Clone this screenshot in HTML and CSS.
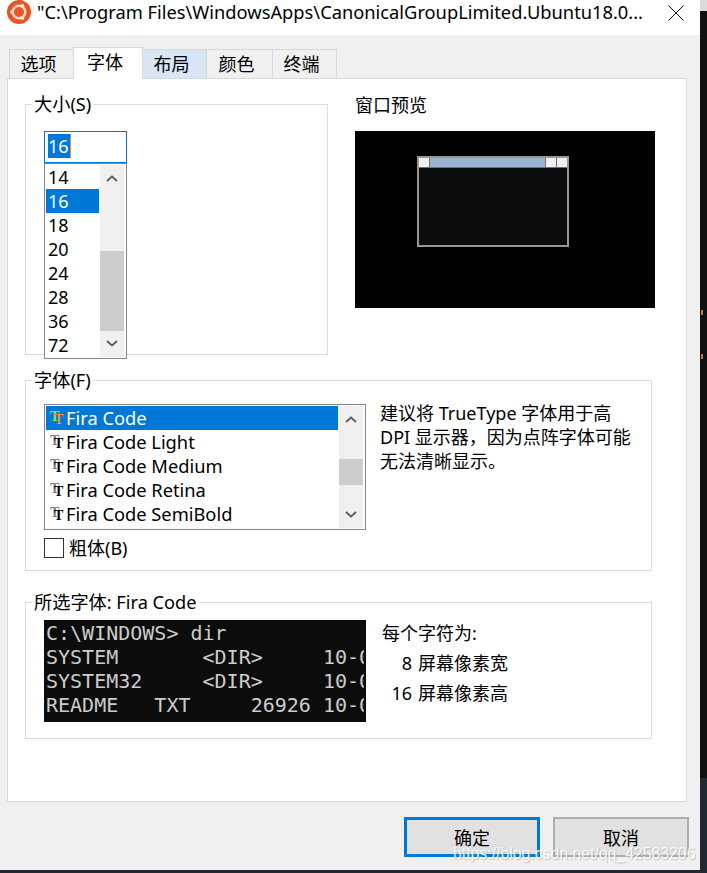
FILE: index.html
```html
<!DOCTYPE html>
<html lang="en">
<head>
  <meta charset="UTF-8" />
  <title>Ubuntu 属性</title>
  <link rel="stylesheet" href="styles.css">
</head>
<body>

  <div class="window">

    <div class="titlebar">
      <svg class="logo" width="24" height="24" viewBox="0 0 24 24">
        <circle cx="12" cy="12" r="12" fill="#e95420"/>
        <circle cx="12" cy="12" r="6.300" fill="none" stroke="#fbd9c9" stroke-width="2.500"/>
        <path d="M12 12L5 12M12 12L15.500 18M12 12L15.500 6" stroke="#e95420" stroke-width="1.200"/>
        <circle cx="5.200" cy="12" r="2" fill="#fbe3d8"/>
        <circle cx="15.400" cy="6.100" r="2" fill="#fbe3d8"/>
        <circle cx="15.400" cy="17.900" r="2" fill="#fbe3d8"/>
      </svg>
      <span class="title">"C:\Program Files\WindowsApps\CanonicalGroupLimited.Ubuntu18.0...</span>
      <svg class="close" width="16" height="16" viewBox="0 0 16 16">
        <path d="M0.500 0.500L15.500 15.500M15.500 0.500L0.500 15.500" stroke="#111" stroke-width="1" fill="none"/>
      </svg>
    </div>

    <div class="tabs">
      <div class="tab">选项</div>
      <div class="tab selected">字体</div>
      <div class="tab hover">布局</div>
      <div class="tab wide">颜色</div>
      <div class="tab">终端</div>
    </div>

    <div class="panel">

      <div class="top-row">
        <fieldset class="group size-group">
          <legend>大小(S)</legend>
          <div class="size-input"><span class="size-value">16</span><span class="caret"></span></div>
          <div class="listbox size-list">
            <div class="items">
              <div class="item">14</div>
              <div class="item active">16</div>
              <div class="item">18</div>
              <div class="item">20</div>
              <div class="item">24</div>
              <div class="item">28</div>
              <div class="item">36</div>
              <div class="item">72</div>
            </div>
            <div class="scrollbar">
              <svg class="arrow" width="12" height="7" viewBox="0 0 12 7"><path d="M1 6L6 1.500L11 6" fill="none" stroke="#606060" stroke-width="2"/></svg>
              <div class="track"><div class="thumb size-thumb"></div></div>
              <svg class="arrow" width="12" height="7" viewBox="0 0 12 7"><path d="M1 1L6 5.500L11 1" fill="none" stroke="#606060" stroke-width="2"/></svg>
            </div>
          </div>
        </fieldset>

        <div class="preview-col">
          <div class="preview-label">窗口预览</div>
          <div class="preview">
            <div class="mini-window">
              <div class="mini-bar">
                <span class="mini-btn"></span>
                <span class="mini-title"></span>
                <span class="mini-btn"></span>
                <span class="mini-btn"></span>
              </div>
            </div>
          </div>
        </div>
      </div>

      <fieldset class="group font-group">
        <legend>字体(F)</legend>
        <div class="font-row">
          <div class="listbox font-list">
            <div class="items">
              <div class="item font-item active"><span class="tt"></span>Fira Code</div>
              <div class="item font-item"><span class="tt"></span>Fira Code Light</div>
              <div class="item font-item"><span class="tt"></span>Fira Code Medium</div>
              <div class="item font-item"><span class="tt"></span>Fira Code Retina</div>
              <div class="item font-item"><span class="tt"></span>Fira Code SemiBold</div>
            </div>
            <div class="scrollbar">
              <svg class="arrow" width="12" height="7" viewBox="0 0 12 7"><path d="M1 6L6 1.500L11 6" fill="none" stroke="#606060" stroke-width="2"/></svg>
              <div class="track"><div class="thumb font-thumb"></div></div>
              <svg class="arrow" width="12" height="7" viewBox="0 0 12 7"><path d="M1 1L6 5.500L11 1" fill="none" stroke="#606060" stroke-width="2"/></svg>
            </div>
          </div>
          <p class="note">建议将 TrueType 字体用于高<br>DPI 显示器，因为点阵字体可能<br>无法清晰显示。</p>
        </div>
        <label class="bold-row"><span class="checkbox"></span>粗体(B)</label>
      </fieldset>

      <fieldset class="group sample-group">
        <legend>所选字体: Fira Code</legend>
        <div class="sample-row">
          <pre class="console">C:\WINDOWS&gt; dir
SYSTEM       &lt;DIR&gt;     10-0
SYSTEM32     &lt;DIR&gt;     10-0
README   TXT     26926 10-0</pre>
          <div class="char-info">
            <div>每个字符为:</div>
            <div class="char-line"><span class="num">8</span>屏幕像素宽</div>
            <div class="char-line"><span class="num">16</span>屏幕像素高</div>
          </div>
        </div>
      </fieldset>

    </div>

    <div class="buttons">
      <button class="btn default" type="button">确定</button>
      <button class="btn" type="button">取消</button>
    </div>
  </div>

  <span class="speck speck-one"></span>
  <span class="speck speck-two"></span>
  <div class="watermark">https://blog.csdn.net/qq_42583206</div>

</body>
</html>
```

FILE: styles.css
```css
* {
  box-sizing: border-box;
}

body {
  margin: 0;
  width: 707px;
  height: 873px;
  overflow: hidden;
  position: relative;
  font-family: "Noto Sans", "Noto Sans CJK SC", sans-serif;
  font-size: 18px;
  line-height: 24px;
  color: #000;
  background: linear-gradient(#dcdcdc 11px, #111 11px, #111 778px, #23272f 778px);
}

.window {
  width: 700px;
  height: 870px;
  background: #f0f0f0;
}

/* title bar */
.titlebar {
  height: 35px;
  background: white;
  display: flex;
  align-items: flex-start;
  padding-left: 7px;
}

.logo {
  flex: none;
}

.title {
  margin-left: 6px;
  width: 625px;
  font-size: 18.300px;
  white-space: nowrap;
  overflow: hidden;
}

.close {
  margin: 5px 0 0 6px;
  flex: none;
}

/* tabs */
.tabs {
  display: flex;
  align-items: flex-end;
  height: 31px;
  margin-top: 12px;
  padding-left: 9px;
}

.tab {
  width: 65px;
  height: 29px;
  margin-right: -1px;
  padding-right: 6px;
  border: 1px solid #d9d9d9;
  border-bottom: none;
  text-align: center;
  line-height: 28px;
  background: #f0f0f0;
}

.tab.wide {
  width: 67px;
}

.tab.selected {
  position: relative;
  z-index: 1;
  width: 70px;
  height: 32px;
  margin-bottom: -1px;
  line-height: 29px;
  background: white;
}

.tab.hover {
  background: #d8e6f5;
}

.panel {
  width: 680px;
  height: 724px;
  margin-left: 7px;
  padding: 13px 0 0 17px;
  background: white;
  border: 1px solid #d9d9d9;
}

/* groups */
.group {
  margin: 0;
  padding: 0 0 0 18px;
  border: 1px solid #dcdcdc;
  min-width: 0;
}

.group legend {
  margin-left: -12px;
  padding: 0 2px;
  font-size: 18.200px;
  line-height: 24px;
}

.top-row {
  display: flex;
  gap: 27px;
}

.size-group {
  width: 303px;
  height: 263px;
  padding-top: 15px;
}

.font-group {
  width: 627px;
  height: 203px;
  margin-top: 13px;
  padding-top: 12px;
}

.sample-group {
  width: 627px;
  height: 149px;
  margin-top: 19px;
  padding-top: 6px;
}

/* size picker */
.size-input {
  width: 83px;
  height: 32px;
  border: 1px solid #0078d7;
  padding: 2px 0 0 3px;
  display: flex;
}

.size-value {
  width: 22px;
  height: 24px;
  background: #0078d7;
  color: white;
  line-height: 24px;
}

.caret {
  width: 1px;
  height: 24px;
  background: #e8892f;
}

.listbox {
  display: flex;
  border: 1px solid #82878f;
  padding: 1px;
  background: white;
}

.size-list {
  position: relative;
  width: 83px;
  height: 196px;
}

.font-list {
  width: 322px;
  height: 126px;
  flex: none;
}

.items {
  flex: 1;
}

.item {
  height: 24px;
  padding-left: 2px;
  line-height: 24px;
  white-space: nowrap;
}

.item.active {
  background: #0078d7;
  color: white;
}

.font-item {
  display: flex;
  align-items: center;
  padding-left: 4px;
  font-size: 18.300px;
}

/* truetype icon, two overlapping letters */
.tt {
  position: relative;
  width: 13px;
  height: 14px;
  margin-right: 3px;
  font-family: "Liberation Serif", serif;
  font-weight: bold;
  font-size: 14px;
  line-height: 14px;
}

.tt::before {
  content: "T";
  position: absolute;
  left: 0;
  top: -1px;
  color: #808080;
}

.tt::after {
  content: "T";
  position: absolute;
  left: 4px;
  top: 2px;
  color: #000;
}

.active .tt::before {
  color: #7fe85a;
}

.active .tt::after {
  color: #f08a3c;
}

.scrollbar {
  width: 24px;
  margin-left: 1px;
  margin-right: 1px;
  background: #f0f0f0;
  display: flex;
  flex-direction: column;
  align-items: center;
}

.arrow {
  flex: none;
  margin: 10px 0 7px;
}

.arrow:last-child {
  margin: 7px 0 10px;
}

.track {
  flex: 1;
  width: 100%;
}

.thumb {
  background: #cdcdcd;
}

.size-thumb {
  height: 80px;
  margin-top: 62px;
}

.font-thumb {
  height: 26px;
  margin-top: 29px;
}

/* window preview */
.preview-col {
  padding-top: 1px;
}

.preview-label {
  height: 38px;
}

.preview {
  width: 300px;
  height: 177px;
  padding: 25px 0 0 62px;
  background: black;
}

.mini-window {
  width: 152px;
  height: 91px;
  border: 2px solid #969696;
  background: #0c0c0c;
}

.mini-bar {
  display: flex;
  gap: 1px;
  height: 10px;
  background: #6e6e6e;
  border-bottom: 1px solid #6e6e6e;
}

.mini-btn {
  width: 10px;
  background: #f0f0f0;
}

.mini-title {
  flex: 1;
  background: #99b4d1;
}

/* font row */
.font-row {
  display: flex;
  gap: 14px;
}

.note {
  margin: -3px 0 0;
}

.bold-row {
  display: flex;
  align-items: center;
  margin-top: 8px;
  height: 20px;
}

.checkbox {
  width: 20px;
  height: 20px;
  margin-right: 5px;
  border: 1px solid #333;
  background: white;
}

/* selected font sample */
.sample-row {
  display: flex;
  gap: 16px;
}

.console {
  width: 322px;
  height: 102px;
  margin: 0;
  padding: 1px 0 0 2px;
  overflow: hidden;
  flex: none;
  background: #0c0c0c;
  border-right: 2px solid #0c0c0c;
  color: #cccccc;
  font-family: "DejaVu Sans Mono", monospace;
  font-size: 20px;
  line-height: 24px;
}

.char-info {
  margin-top: -2px;
  line-height: 30px;
}

.char-line {
  display: flex;
}

.num {
  width: 30px;
  margin-right: 6px;
  text-align: right;
}

/* bottom buttons */
.buttons {
  display: flex;
  justify-content: flex-end;
  gap: 13px;
  margin-top: 15px;
  padding-right: 11px;
}

.btn {
  width: 136px;
  height: 40px;
  padding: 2px 0 0;
  border: 2px solid #adadad;
  background: #e1e1e1;
  font: inherit;
  color: #000;
}

.btn.default {
  border: 3px solid #0078d7;
}

/* bits of the desktop behind the dialog */
.speck {
  position: absolute;
  left: 701px;
  width: 2px;
  height: 5px;
  background: #c87b2c;
}

.speck-one {
  top: 310px;
}

.speck-two {
  top: 354px;
}

/* csdn image stamp */
.watermark {
  position: absolute;
  left: 453px;
  top: 843px;
  font-family: "Liberation Sans", sans-serif;
  font-size: 15.800px;
  line-height: 22px;
  white-space: nowrap;
  color: rgba(255, 255, 255, 0.85);
  text-shadow: 1px 1px 1px rgba(150, 150, 150, 0.5);
}
```
